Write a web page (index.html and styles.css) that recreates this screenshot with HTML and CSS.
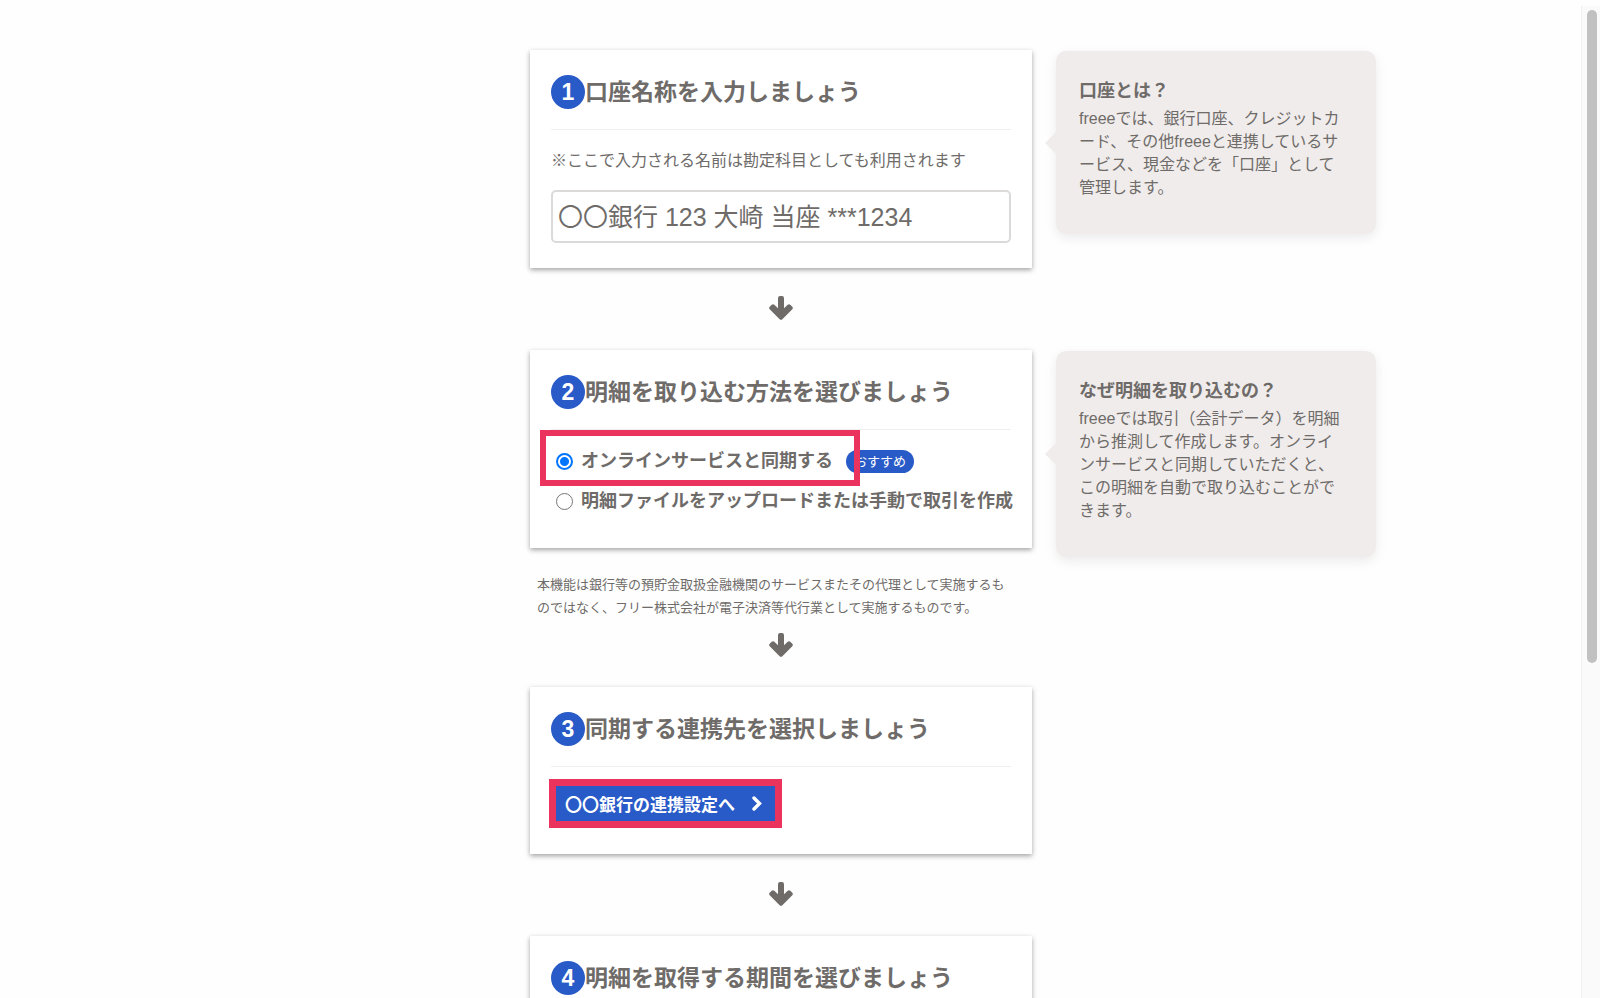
FILE: index.html
```html
<!DOCTYPE html>
<html lang="ja">
<head>
<meta charset="utf-8">
<title>口座の登録</title>
<link rel="stylesheet" href="styles.css">
</head>
<body>
<svg class="defs" aria-hidden="true">
  <symbol id="arrow-down" viewBox="0 0 24 24">
    <path d="M9 2.2Q9 0 11 0H13Q15 0 15 2.2V12.2L18.7 8.8Q20 7.7 21.3 8.8L23.3 10.8Q24.4 12 23.3 13.2L13.6 22.9Q12 24.6 10.4 22.9L.7 13.2Q-.4 12 .7 10.8L2.7 8.8Q4 7.7 5.3 8.8L9 12.2Z" fill="currentColor"/>
  </symbol>
</svg>
<div class="page">
  <main class="steps">
    <section class="step">
      <div class="step-main">
        <div class="card">
          <h2 class="card-title"><span class="num">1</span>口座名称を入力しましょう</h2>
          <div class="field">
            <label class="field-note" for="account">※ここで入力される名前は勘定科目としても利用されます</label>
            <input class="field-input" id="account" type="text" value="〇〇銀行 123 大崎 当座 ***1234">
          </div>
        </div>
      </div>
      <aside class="tip">
        <h3 class="tip-title">口座とは？</h3>
        <p class="tip-text">freeeでは、銀行口座、クレジットカード、その他freeeと連携しているサービス、現金などを「口座」として管理します。</p>
      </aside>
    </section>
    <svg class="arrow"><use href="#arrow-down"/></svg>
    <section class="step">
      <div class="step-main">
        <div class="card">
          <h2 class="card-title"><span class="num">2</span>明細を取り込む方法を選びましょう</h2>
          <div class="options">
            <div class="option option-marked">
              <input class="radio" type="radio" name="method" id="sync" checked>
              <label class="option-label" for="sync">オンラインサービスと同期する</label>
              <span class="pill">おすすめ</span>
            </div>
            <div class="option">
              <input class="radio" type="radio" name="method" id="manual">
              <label class="option-label" for="manual">明細ファイルをアップロードまたは手動で取引を作成</label>
            </div>
          </div>
        </div>
        <p class="footnote">本機能は銀行等の預貯金取扱金融機関のサービスまたその代理として実施するものではなく、フリー株式会社が電子決済等代行業として実施するものです。</p>
      </div>
      <aside class="tip">
        <h3 class="tip-title">なぜ明細を取り込むの？</h3>
        <p class="tip-text">freeeでは取引（会計データ）を明細から推測して作成します。オンラインサービスと同期していただくと、この明細を自動で取り込むことができます。</p>
      </aside>
    </section>
    <svg class="arrow arrow-near"><use href="#arrow-down"/></svg>
    <section class="step">
      <div class="step-main">
        <div class="card">
          <h2 class="card-title"><span class="num">3</span>同期する連携先を選択しましょう</h2>
          <div class="action">
            <button class="button" type="button">〇〇銀行の連携設定へ
              <svg class="chevron" viewBox="0 0 10 15"><path d="M2 2L7.500 7.500L2 13" fill="none" stroke="currentColor" stroke-width="3.400" stroke-linecap="round"/></svg>
            </button>
          </div>
        </div>
      </div>
    </section>
    <svg class="arrow"><use href="#arrow-down"/></svg>
    <section class="step">
      <div class="step-main">
        <div class="card">
          <h2 class="card-title"><span class="num">4</span>明細を取得する期間を選びましょう</h2>
        </div>
      </div>
    </section>
  </main>
  <div class="scrollbar" aria-hidden="true"><div class="thumb"></div></div>
</div>
</body>
</html>
```

FILE: styles.css
```css
*, *::before, *::after {
  box-sizing: border-box;
}

body {
  margin: 0;
  background: #fefefe;
  color: #6e6b69;
  font-family: "Liberation Sans", "Noto Sans CJK JP", sans-serif;
  font-size: 16px;
}

h2, h3, p {
  margin: 0;
}

.defs {
  display: none;
}

.page {
  display: flex;
  height: 100vh;
  overflow: hidden;
}

.steps {
  flex: 1;
  padding: 50px 19px 0 0;
}

.step {
  display: grid;
  grid-template-columns: minmax(0, 1fr) minmax(0, 502px) minmax(0, 1fr);
  align-items: start;
}

.step-main {
  grid-column: 2;
}

.card {
  padding: 25px 21px;
  background: #fff;
  box-shadow: 0 2px 5px rgba(0, 0, 0, 0.36);
}

.card-title {
  display: flex;
  align-items: center;
  padding-bottom: 20px;
  border-bottom: 1px solid #f0efee;
  font-size: 23px;
  line-height: 34px;
}

.num {
  width: 34px;
  height: 34px;
  border-radius: 50%;
  background: #285ac8;
  color: #fff;
  text-align: center;
}

.field {
  display: flex;
  flex-direction: column;
  gap: 17px;
  padding-top: 19px;
}

.field-note {
  line-height: 24px;
}

.field-input {
  width: 100%;
  height: 53px;
  padding: 0 5px 4px;
  border: 2px solid #dcdad9;
  border-radius: 5px;
  background: #fff;
  color: inherit;
  font: inherit;
  font-size: 25px;
}

.arrow {
  display: block;
  width: 24px;
  height: 24px;
  margin: 28px auto 30px;
}

.arrow-near {
  margin-top: 14px;
}

.options {
  padding: 11px 0 2px;
}

.option {
  display: flex;
  position: relative;
  align-items: center;
  height: 40px;
  padding-left: 5px;
}

.option-marked::after {
  content: "";
  position: absolute;
  top: -11px;
  left: -11px;
  width: 320px;
  height: 56px;
  border: 6px solid #ea345d;
  pointer-events: none;
}

.radio {
  appearance: none;
  flex: none;
  width: 17px;
  height: 17px;
  margin: 0 8px 0 0;
  border: 1px solid #767676;
  border-radius: 50%;
  background: #fff;
}

.radio:checked {
  border: 2px solid #0075ff;
  background: radial-gradient(circle, #0075ff 4px, #fff 5px);
}

.option-label {
  font-size: 18px;
  font-weight: bold;
  line-height: 24px;
  white-space: nowrap;
}

.pill {
  margin-left: 13px;
  padding: 0 8px;
  border-radius: 12px;
  background: #285ac8;
  color: #fff;
  font-size: 13px;
  line-height: 23px;
}

.footnote {
  padding: 25px 20px 0 7px;
  font-size: 13px;
  line-height: 23px;
}

.tip {
  position: relative;
  max-width: 320px;
  margin: 1px 0 0 24px;
  padding: 25px 33px 35px 23px;
  border-radius: 10px;
  background: #f0eceb;
  box-shadow: 0 4px 12px rgba(0, 0, 0, 0.08);
}

.tip::before {
  content: "";
  position: absolute;
  top: calc(50% - 11px);
  left: -11px;
  border: solid transparent;
  border-width: 11px 11px 11px 0;
  border-right-color: #f0eceb;
}

.tip-title {
  padding-bottom: 1px;
  font-size: 18px;
  line-height: 30px;
}

.tip-text {
  line-height: 23px;
}

.action {
  position: relative;
  width: 229px;
  margin: 17px 0 6px;
}

.action::after {
  content: "";
  position: absolute;
  inset: -5px -2px;
  border: 7px solid #ea345d;
  pointer-events: none;
}

.button {
  display: flex;
  align-items: center;
  justify-content: space-between;
  width: 100%;
  height: 39px;
  padding: 0 18px 0 14px;
  border: 0;
  background: #285ac8;
  color: #fff;
  font: bold 17px "Liberation Sans", "Noto Sans CJK JP", sans-serif;
}

.chevron {
  width: 10px;
  height: 15px;
}

.scrollbar {
  width: 19px;
  margin-top: 6px;
  padding: 4px 5px;
  border-left: 1px solid #f0f0f0;
  background: #fafafa;
}

.thumb {
  width: 10px;
  height: 66.4%;
  border-radius: 5px;
  background: #c1c1c1;
}
```
